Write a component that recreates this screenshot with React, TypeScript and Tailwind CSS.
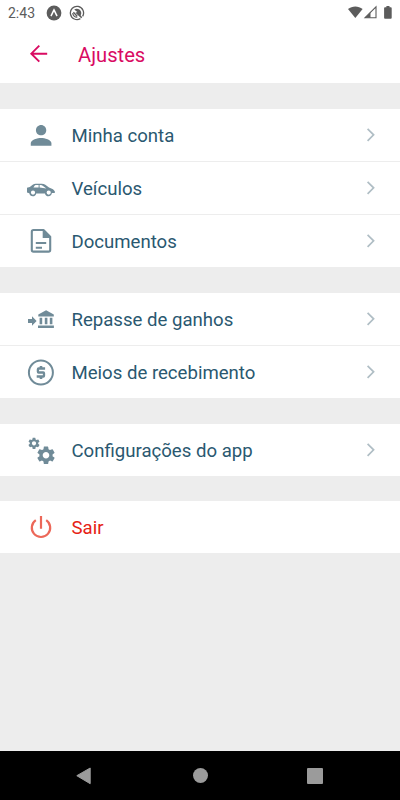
import { ReactNode } from 'react';
import { MdPerson, MdSettings } from 'react-icons/md';

type IconProps = { children: ReactNode };

function IconBox({ children }: IconProps) {
  return (
    <svg className="w-[30px] h-[30px] shrink-0" viewBox="0 0 30 30" fill="none">
      {children}
    </svg>
  );
}

function PersonIcon() {
  return (
    <IconBox>
      <MdPerson x={-0.4} y={-0.2} size={31} fill="currentColor" />
    </IconBox>
  );
}

function CarIcon() {
  return (
    <IconBox>
      <path
        fill="currentColor"
        fillRule="evenodd"
        d="M1 14.8l2.8-.9 2.9-2.1c1-.7 1.9-1 3-1h6c1.4 0 2.5.3 3.6 1l3.7 2.6 4 1.9 1.8 1.9v1.9h-2.9c-.2 2-1.5 3.2-3.4 3.2s-3.2-1.2-3.5-2.9h-8.8c-.3 1.7-1.6 2.9-3.4 2.9-1.9 0-3.2-1.2-3.5-3L1 19.6zM7.4 14.6h5.2v-2.5h-2.4c-.9 0-1.3.2-1.8.8zM13.6 14.6l6.8.9-3.4-2.6c-.8-.6-1.4-.8-2.4-.8h-1zM7 17.5a2.1 2.1 0 1 0 0 4.2 2.1 2.1 0 0 0 0-4.2zM22.7 17.5a2.1 2.1 0 1 0 0 4.2 2.1 2.1 0 0 0 0-4.2z"
      />
    </IconBox>
  );
}

function DocumentIcon() {
  return (
    <IconBox>
      <path
        stroke="currentColor"
        strokeWidth="2.1"
        strokeLinejoin="round"
        d="M17.5 4H7.5c-1 0-1.7.7-1.7 1.7v18.2c0 1 .7 1.7 1.7 1.7h15c1 0 1.7-.7 1.7-1.7V10.8z"
      />
      <path fill="currentColor" d="M16.7 3.4v8.5h8.2z" />
      <path stroke="currentColor" strokeWidth="2" d="M9.8 17h10.4M9.8 21.7h6.2" />
    </IconBox>
  );
}

function BankTransferIcon() {
  return (
    <IconBox>
      <path fill="currentColor" d="M2 15h4v-2.7l4.6 4.7L6 21.7V19H2z" />
      <path
        fill="currentColor"
        d="M20.1 6.3l7.7 4.2v2H12.3v-2zM13.6 13.8h2.6v6.4h-2.6zM18.8 13.8h2.6v6.4h-2.6zM23.8 13.8h2.6v6.4h-2.6zM12 21.6h15.9V24H12z"
      />
    </IconBox>
  );
}

function MoneyIcon() {
  return (
    <IconBox>
      <circle cx="14.9" cy="15.5" r="12" stroke="currentColor" strokeWidth="2" />
      <path
        stroke="currentColor"
        strokeWidth="2.3"
        strokeLinejoin="round"
        d="M19.1 11.5h-6.5c-.4 0-.7.3-.7.7v2.6c0 .4.3.7.7.7h4.7c.4 0 .7.3.7.7v2.6c0 .4-.3.7-.7.7h-6.6"
      />
      <path stroke="currentColor" strokeWidth="2.6" d="M15 8.9V12M15 19v3.1" />
    </IconBox>
  );
}

function GearsIcon() {
  return (
    <IconBox>
      <MdSettings x={1} y={1.3} size={14} fill="currentColor" />
      <MdSettings x={9} y={9.3} size={22} fill="currentColor" />
    </IconBox>
  );
}

function PowerIcon() {
  return (
    <IconBox>
      <path
        stroke="currentColor"
        strokeWidth="2.2"
        d="M9.8 8.2a9.2 9.2 0 1 0 10.4 0M15 4.1v12.7"
      />
    </IconBox>
  );
}

function ChevronIcon() {
  return (
    <svg className="w-3 h-4 text-[#b0bec5]" viewBox="0 0 12 16" fill="none">
      <path stroke="currentColor" strokeWidth="1.7" d="M2.6 1.8l6 6-6 6" />
    </svg>
  );
}

type Item = { label: string; icon: ReactNode; danger?: boolean };

const sections: Item[][] = [
  [
    { label: 'Minha conta', icon: <PersonIcon /> },
    { label: 'Veículos', icon: <CarIcon /> },
    { label: 'Documentos', icon: <DocumentIcon /> },
  ],
  [
    { label: 'Repasse de ganhos', icon: <BankTransferIcon /> },
    { label: 'Meios de recebimento', icon: <MoneyIcon /> },
  ],
  [{ label: 'Configurações do app', icon: <GearsIcon /> }],
  [{ label: 'Sair', icon: <PowerIcon />, danger: true }],
];

function StatusBar() {
  return (
    <div className="flex h-6 items-center justify-between pl-2 pr-[7px] text-[#5c5c5c]">
      <div className="flex items-center">
        <span className="w-[38px] pt-0.5 text-sm leading-6">2:43</span>
        <svg className="w-4 h-4 mt-px" viewBox="0 0 16 16">
          <circle cx="8" cy="8" r="7.4" fill="currentColor" />
          <path d="M4.9 11c1.2-1.6 1.9-3.9 3.1-6.2 1.2 2.3 1.9 4.6 3.1 6.2" fill="none" stroke="#fff" strokeWidth="1.5" />
        </svg>
        <svg className="ml-[7px] w-4 h-4 mt-px" viewBox="0 0 16 16" fill="none">
          <path d="M11.4 13.6A6.6 6.6 0 1 1 13.6 11.4" stroke="currentColor" strokeWidth="1.3" />
          <path d="M8.3 12.2A4.2 4.2 0 0 1 3.8 8" stroke="currentColor" strokeWidth="1.2" />
          <path d="M5.2 4.6c2.4-1.6 6-.6 6.9 2.4.4 1.2.1 2.3-.5 3.2l1.6 2-1 1-5.8-5.5 1.9-.8z" fill="currentColor" />
          <path d="M4.4 7.2l3.8 4" stroke="currentColor" strokeWidth="1.3" />
        </svg>
      </div>
      <svg className="w-[46px] h-4" viewBox="0 0 46 16">
        <path d="M8.3 14.1L1 5.1c4.2-3.6 10.4-3.6 14.6 0z" fill="currentColor" />
        <path d="M18.1 13.7L29 2.8v10.9z" fill="none" stroke="currentColor" strokeWidth="1.1" />
        <path d="M18.1 13.7l5.4-5.4v5.4z" fill="currentColor" />
        <path d="M37.1 4.2c0-.6.3-.9.9-.9h1.4V2h3.1v1.3h1.3c.6 0 .9.3.9.9v9.6c0 .5-.3.9-.9.9H38c-.6 0-.9-.4-.9-.9z" fill="currentColor" />
      </svg>
    </div>
  );
}

function Row({ item }: { item: Item }) {
  return (
    <button
      type="button"
      className={`flex h-[52px] w-full items-center bg-white pl-[26px] pr-[23px] text-left ${item.danger ? 'text-[#ec6859]' : 'text-[#708b98]'}`}
    >
      {item.icon}
      <span className={`ml-[15.5px] flex-1 pt-0.5 text-[18.6px] leading-6 ${item.danger ? 'text-[#e62114]' : 'text-[#2a5870]'}`}>
        {item.label}
      </span>
      {!item.danger && <ChevronIcon />}
    </button>
  );
}

export default function App() {
  return (
    <div className="flex h-[800px] w-[400px] flex-col overflow-hidden bg-[#ededed] font-['Roboto',sans-serif]">
      {/* Header */}
      <header className="h-[83px] shrink-0 bg-white">
        <StatusBar />
        <div className="flex h-[59px] items-center pl-[29px] text-[#d90b62]">
          <svg className="w-5 h-5" viewBox="0 0 20 20" fill="none">
            <path stroke="currentColor" strokeWidth="1.9" d="M18.2 9.7H2.4M10.3 1.7l-8 8 8 8" />
          </svg>
          <h1 className="ml-[29px] pt-[3px] text-[20.2px] leading-7">Ajustes</h1>
        </div>
      </header>

      {/* Menu sections */}
      <main className="flex flex-1 flex-col gap-[26px] pt-[26px]">
        {sections.map((items) => (
          <section key={items[0].label} className="flex flex-col gap-px last:-mt-px">
            {items.map((item) => (
              <Row key={item.label} item={item} />
            ))}
          </section>
        ))}
      </main>

      {/* Android navigation */}
      <nav className="flex h-[49px] shrink-0 items-center justify-between bg-black pl-[76px] pr-[77px] text-[#9b9b9b]">
        <svg className="w-[17px] h-[18px]" viewBox="0 0 17 18">
          <path d="M.8 8.7L14.2 1v15.7z" fill="currentColor" stroke="currentColor" strokeWidth="1" strokeLinejoin="round" />
        </svg>
        <div className="h-[15px] w-[15px] rounded-full bg-[#9b9b9b]" />
        <div className="h-4 w-4 rounded-[1px] bg-[#9b9b9b]" />
      </nav>
    </div>
  );
}
